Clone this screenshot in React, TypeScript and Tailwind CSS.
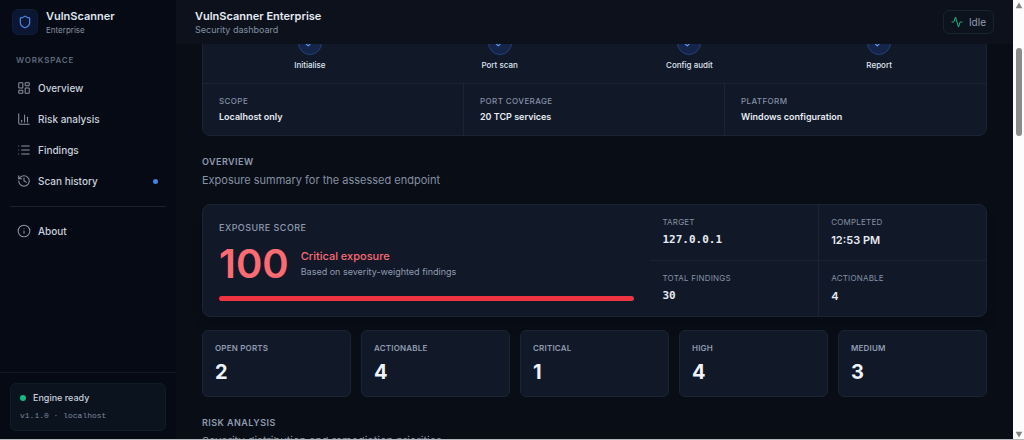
import React from 'react'
import { Activity, ChartColumn, Check, History, Info, LayoutDashboard, List, Shield } from 'lucide-react'

const navItems = [
  { label: 'Overview', icon: LayoutDashboard },
  { label: 'Risk analysis', icon: ChartColumn },
  { label: 'Findings', icon: List },
  { label: 'Scan history', icon: History, dot: true },
]

const steps = ['Initialise', 'Port scan', 'Config audit', 'Report']

const scope = [
  { label: 'Scope', value: 'Localhost only' },
  { label: 'Port coverage', value: '20 TCP services' },
  { label: 'Platform', value: 'Windows configuration' },
]

const details = [
  { label: 'Target', value: '127.0.0.1', mono: true },
  { label: 'Completed', value: '12:53 PM' },
  { label: 'Total findings', value: '30', mono: true },
  { label: 'Actionable', value: '4' },
]

const stats = [
  { label: 'Open ports', value: 2 },
  { label: 'Actionable', value: 4 },
  { label: 'Critical', value: 1 },
  { label: 'High', value: 4 },
  { label: 'Medium', value: 3 },
]

const Sidebar = () => {
  return (
    <aside className="flex w-44 shrink-0 flex-col bg-[#060a14]">
      <div className="flex h-11 items-center gap-2 px-3">
        <div className="flex size-[26px] items-center justify-center rounded-md border border-[#0f1d3c] bg-[#0b1732]">
          <Shield className="size-3.5 text-[#4a86e8]" />
        </div>
        <div>
          <p className="text-[11px] leading-4 font-semibold text-[#dfe5ef]">VulnScanner</p>
          <p className="text-[8px] leading-3 text-[#8791a3]">Enterprise</p>
        </div>
      </div>

      <nav className="flex flex-col px-2.5">
        <h2 className="mb-2 px-1.5 pt-2.5 text-[8px] leading-3 font-semibold tracking-widest text-[#5f697c] uppercase">
          Workspace
        </h2>
        <ul className="flex flex-col gap-[3px]">
          {navItems.map(({ label, icon: Icon, dot }) => (
            <li key={label}>
              <a href="#" className="flex h-7 items-center gap-[7px] pr-2 pl-[7px] text-[10px] font-medium text-[#c9d1de]">
                <Icon className="size-3.5 text-[#8a94a6]" strokeWidth={1.75} />
                {label}
                {dot && <span className="ml-auto size-[5px] rounded-full bg-[#4484e4]" />}
              </a>
            </li>
          ))}
        </ul>
        <div className="mt-[11px] border-t border-[#1a2130] pt-2.5">
          <a href="#" className="flex h-7 items-center gap-[7px] pr-2 pl-[7px] text-[10px] font-medium text-[#c9d1de]">
            <Info className="size-3.5 text-[#8a94a6]" strokeWidth={1.75} />
            About
          </a>
        </div>
      </nav>

      {/* Engine status */}
      <div className="mt-auto border-t border-[#101724] px-2.5 pt-2.5 pb-2">
        <div className="rounded-md border border-[#121c28] bg-[#0b131f] px-[9px] pt-1.5 pb-2">
          <p className="flex items-center gap-[7px] text-[9px] leading-4 font-medium text-[#c9d1de]">
            <span className="size-1.5 rounded-full bg-[#15b981]" />
            Engine ready
          </p>
          <p className="pt-1 font-['Liberation_Mono',monospace] text-[8px] leading-3 text-[#7d889b]">
            v1.1.0 · localhost
          </p>
        </div>
      </div>
    </aside>
  )
}

const Header = () => {
  return (
    <header className="flex h-11 shrink-0 items-center justify-between bg-[#0c111b] px-[19px]">
      <div>
        <h1 className="text-[11px] leading-4 font-semibold text-[#e6ebf4]">VulnScanner Enterprise</h1>
        <p className="text-[9px] leading-3 text-[#8390a4]">Security dashboard</p>
      </div>
      <div className="flex h-6 items-center gap-1.5 rounded-md border border-[#192230] bg-[#0c131d] px-[7px] text-[10px] text-[#929daf]">
        <Activity className="size-3 text-[#17b682]" />
        Idle
      </div>
    </header>
  )
}

const SectionTitle = ({ title, children }: { title: string; children: React.ReactNode }) => {
  return (
    <div>
      <h2 className="text-[9px] leading-3 font-semibold tracking-wider text-[#8f9bb0] uppercase">{title}</h2>
      <p className="pt-1 text-[11px] leading-4 text-[#8490a4]">{children}</p>
    </div>
  )
}

const ScanProgress = () => {
  return (
    <section className="rounded-lg border border-[#1b2433] bg-[#111827]">
      <ol className="grid grid-cols-4 px-3 pt-3 pb-3">
        {steps.map((step) => (
          <li key={step} className="flex flex-col items-center gap-1 text-[8px] leading-3 font-medium text-[#dfe5ef]">
            <span className="flex size-6 items-center justify-center rounded-full border border-[#24407c] bg-[#142549]">
              <Check className="size-3.5 text-[#5b9bf5]" />
            </span>
            {step}
          </li>
        ))}
      </ol>
      <dl className="grid grid-cols-3 divide-x divide-[#1b2433] border-t border-[#1b2433]">
        {scope.map(({ label, value }) => (
          <div key={label} className="px-4 pt-[11px] pb-3">
            <dt className="text-[8px] leading-3 font-medium tracking-wider text-[#8490a6] uppercase">{label}</dt>
            <dd className="pt-1 text-[9px] leading-3 font-semibold text-[#e6ebf4]">{value}</dd>
          </div>
        ))}
      </dl>
    </section>
  )
}

const ExposureCard = () => {
  return (
    <section className="grid grid-cols-[4fr_3fr] rounded-lg border border-[#1b2433] bg-[#111827] shadow-lg">
      <div className="flex flex-col px-4 pt-[17px] pb-[15px]">
        <h3 className="text-[9px] leading-3 font-medium tracking-wider text-[#8f9bb0] uppercase">Exposure score</h3>
        <div className="flex items-center gap-3 pt-2">
          <span className="text-[40px] leading-[44px] font-semibold text-[#fb6b74]">100</span>
          <div>
            <p className="text-[11px] leading-4 font-medium text-[#fb6b74]">Critical exposure</p>
            <p className="text-[9px] leading-4 text-[#8f9bb0]">Based on severity-weighted findings</p>
          </div>
        </div>
        <div className="mt-2.5 h-[5px] rounded-full bg-[#ee3341]" />
      </div>
      <dl className="grid grid-cols-2">
        {details.map(({ label, value, mono }) => (
          <div
            key={label}
            className="border-[#1b2433] px-3 pt-[11px] pb-3 even:border-l nth-[-n+2]:border-b"
          >
            <dt className="text-[8px] leading-3 tracking-wide text-[#8490a6] uppercase">{label}</dt>
            <dd
              className={
                mono
                  ? "pt-1 font-['DejaVu_Sans_Mono',monospace] text-[11px] leading-4 font-bold text-[#e6ebf4]"
                  : 'pt-1 text-[11px] leading-4 font-semibold text-[#e6ebf4]'
              }
            >
              {value}
            </dd>
          </div>
        ))}
      </dl>
    </section>
  )
}

const Scrollbar = () => {
  return (
    <div className="flex w-[11px] shrink-0 flex-col items-center justify-between bg-[#fcfcfc]" aria-hidden="true">
      <svg className="mt-0.5 h-[7px] w-2 text-[#858585]" viewBox="0 0 8 7" fill="currentColor">
        <path d="M4 0.5 7.4 6.3H.6Z" />
      </svg>
      <div className="mt-[39px] h-[88px] w-1.5 rounded-full bg-[#8b8b8b]" />
      <div className="flex-1" />
      <svg className="mb-px h-[7px] w-2 text-[#858585]" viewBox="0 0 8 7" fill="currentColor">
        <path d="M4 6.5 7.4 .7H.6Z" />
      </svg>
    </div>
  )
}

const App = () => {
  return (
    <div className="flex h-screen overflow-hidden border-b border-[#b5b7bd] bg-[#090d16] font-['Inter',sans-serif]">
      <Sidebar />
      <div className="flex min-w-0 flex-1 flex-col">
        <Header />
        <main className="min-h-0 flex-1 overflow-hidden px-[26px]">
          {/* page is scrolled part of the way into the progress card */}
          <div className="-mt-[26px] flex flex-col">
            <ScanProgress />
            <div className="pt-5 pb-4">
              <SectionTitle title="Overview">Exposure summary for the assessed endpoint</SectionTitle>
            </div>
            <ExposureCard />
            <dl className="grid grid-cols-5 gap-2.5 pt-[13px] pb-5">
              {stats.map(({ label, value }) => (
                <div key={label} className="rounded-md border border-[#1b2433] bg-[#111827] px-3 pt-[11px] pb-3">
                  <dt className="text-[8px] leading-3 font-semibold tracking-wide text-[#8f9bb0] uppercase">{label}</dt>
                  <dd className="pt-1.5 text-xl leading-6 font-bold text-[#eef2fb]">{value}</dd>
                </div>
              ))}
            </dl>
            <SectionTitle title="Risk analysis">Severity distribution and remediation priorities</SectionTitle>
          </div>
        </main>
      </div>
      <Scrollbar />
    </div>
  )
}

export default App
